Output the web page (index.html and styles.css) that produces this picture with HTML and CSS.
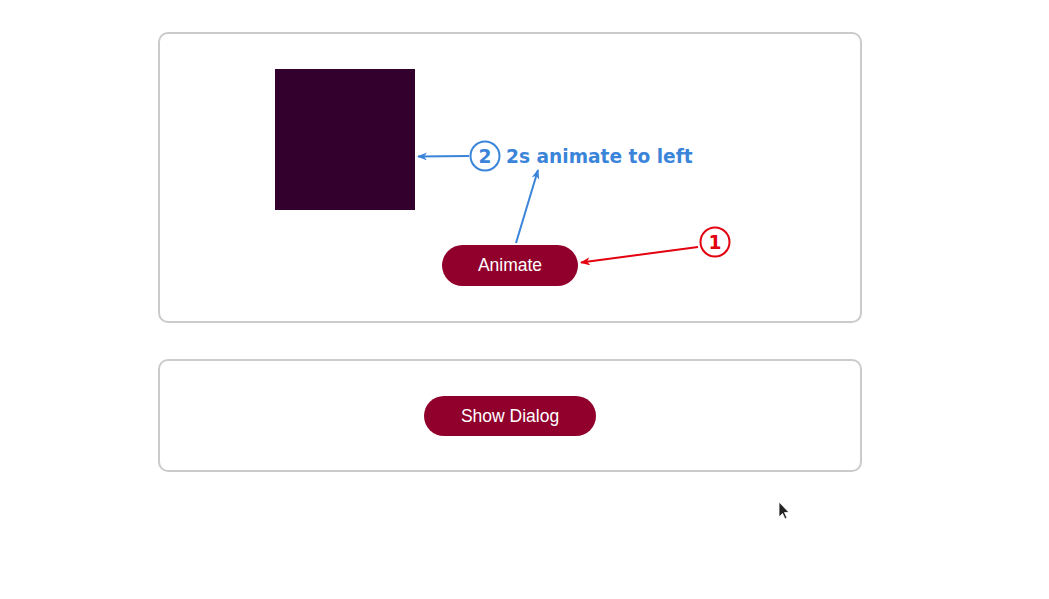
FILE: index.html
```html
<!DOCTYPE html>
<html>
<head>
<meta charset="utf-8">
<link rel="stylesheet" href="styles.css">
</head>
<body>
<div class="page">
  <section class="card card-anim">
    <div class="box"></div>
    <div class="center"><button class="btn btn-anim">Animate</button></div>
  </section>
  <section class="card card-dialog">
    <div class="center"><button class="btn btn-dialog">Show Dialog</button></div>
  </section>
</div>
<svg class="overlay" width="1049" height="599" viewBox="0 0 1049 599">
  <defs>
    <marker id="ab" markerWidth="10" markerHeight="8" refX="9" refY="4" orient="auto" markerUnits="userSpaceOnUse">
      <path d="M0,0 L10,4 L0,8 L3,4 Z" fill="#3a84d9"/>
    </marker>
    <marker id="ar" markerWidth="10" markerHeight="8" refX="9" refY="4" orient="auto" markerUnits="userSpaceOnUse">
      <path d="M0,0 L10,4 L0,8 L3,4 Z" fill="#e3000f"/>
    </marker>
  </defs>
  <line x1="469" y1="156" x2="418" y2="156.5" stroke="#3a84d9" stroke-width="2" marker-end="url(#ab)"/>
  <line x1="516" y1="243" x2="538" y2="170" stroke="#3a84d9" stroke-width="2" marker-end="url(#ab)"/>
  <circle cx="485" cy="156" r="14.5" fill="none" stroke="#3a84d9" stroke-width="2"/>
  <text x="485" y="162.5" class="ann ann-blue" text-anchor="middle">2</text>
  <text x="506" y="163" class="ann ann-blue">2s animate to left</text>
  <line x1="698" y1="247" x2="581" y2="262.5" stroke="#e3000f" stroke-width="2" marker-end="url(#ar)"/>
  <circle cx="715" cy="242" r="14.5" fill="none" stroke="#e3000f" stroke-width="2"/>
  <text x="715" y="248.5" class="ann ann-red" text-anchor="middle">1</text>
  <path d="M779,502 L779,517 L782.5,513.5 L785,519 L787,518 L784.5,512.5 L789,512.5 Z" fill="#222" stroke="#fff" stroke-width="0.8"/>
</svg>
</body>
</html>
```
FILE: styles.css
```css
html, body {
  margin: 0;
  padding: 0;
  background: #fff;
}
body {
  font-family: "Liberation Sans", Arial, sans-serif;
  width: 1049px;
  height: 599px;
  overflow: hidden;
  position: relative;
}
.page {
  padding: 32px 0 0 158px;
  display: flex;
  flex-direction: column;
  gap: 36px;
  width: 704px;
}
.card {
  border: 2px solid #cbcbcb;
  border-radius: 10px;
  box-sizing: border-box;
  width: 704px;
}
.card-anim {
  padding: 35px 0 0 0;
  height: 291px;
}
.card-dialog {
  padding: 35px 0 0 0;
  height: 113px;
}
.box {
  width: 140px;
  height: 141px;
  background: #33002e;
  margin-left: 115px;
}
.center {
  display: flex;
  justify-content: center;
}
.card-anim .center {
  margin-top: 35px;
}
.btn {
  border: none;
  background: #91002c;
  color: #fff;
  font-family: "Liberation Sans", Arial, sans-serif;
  font-size: 17.5px;
  border-radius: 21px;
  padding: 0;
  margin: 0;
}
.btn-anim {
  width: 136px;
  height: 41px;
}
.btn-dialog {
  width: 172px;
  height: 40px;
}
.overlay {
  position: absolute;
  left: 0;
  top: 0;
  pointer-events: none;
}
.ann {
  font-family: "DejaVu Sans", sans-serif;
  font-weight: bold;
  font-size: 18.6px;
}
.ann-blue { fill: #3a84d9; }
.ann-red { fill: #e3000f; }
```
